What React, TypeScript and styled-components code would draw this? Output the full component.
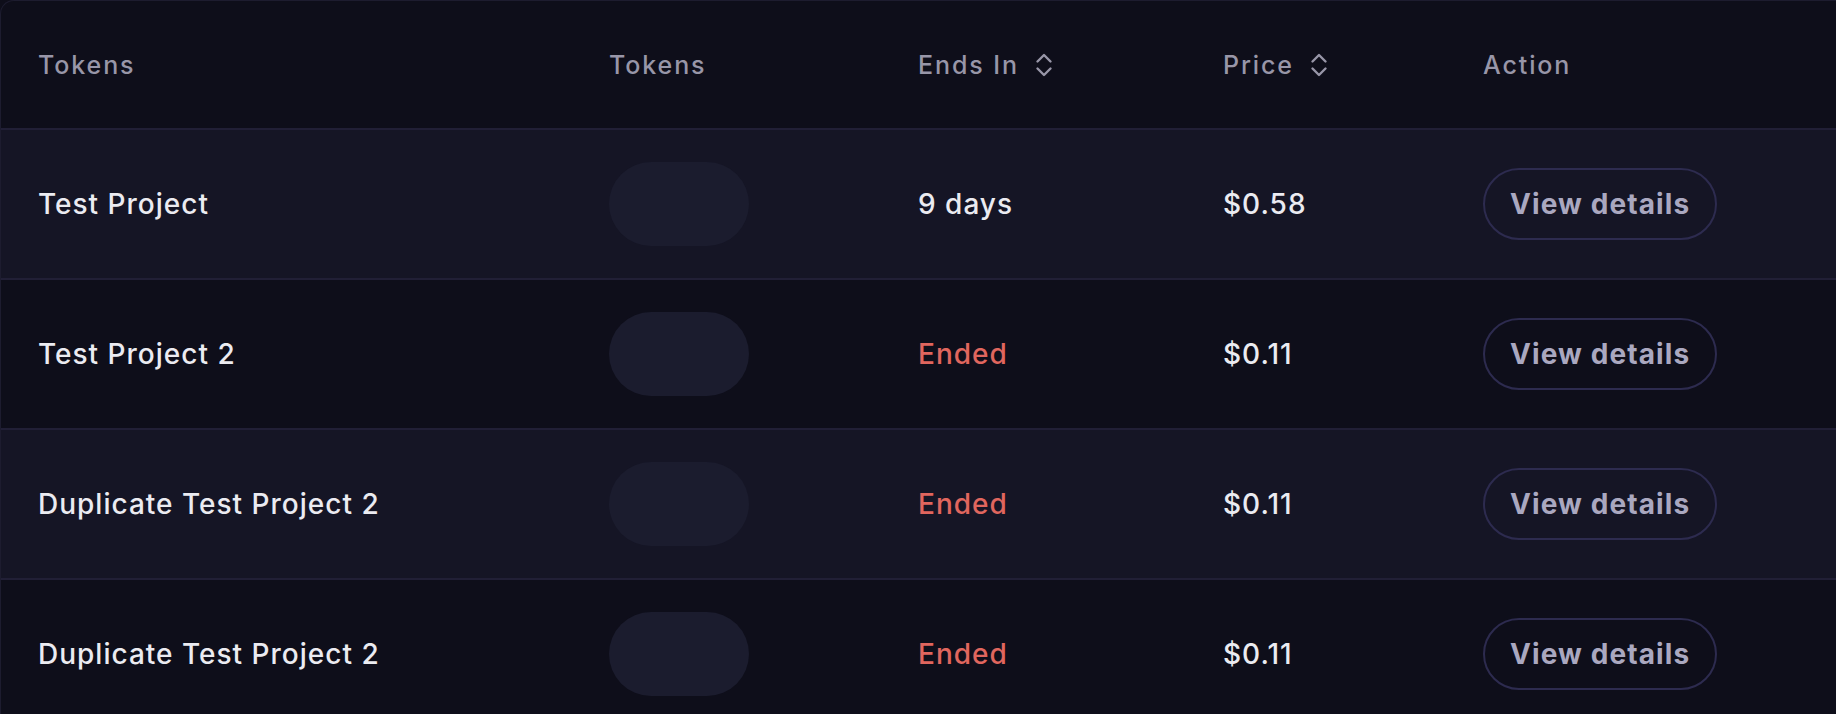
import styled, { createGlobalStyle } from "styled-components";

type Project = {
  name: string;
  endsIn: string;
  ended: boolean;
  price: string;
};

const projects: Project[] = [
  { name: "Test Project", endsIn: "9 days", ended: false, price: "$0.58" },
  { name: "Test Project 2", endsIn: "Ended", ended: true, price: "$0.11" },
  { name: "Duplicate Test Project 2", endsIn: "Ended", ended: true, price: "$0.11" },
  { name: "Duplicate Test Project 2", endsIn: "Ended", ended: true, price: "$0.11" },
];

function SortIcon() {
  return (
    <svg width="18" height="26" viewBox="0 0 18 26" fill="none">
      <path
        d="M2.5 9.5 L9 3 L15.5 9.5"
        stroke="currentColor"
        strokeWidth="2.4"
        strokeLinecap="round"
        strokeLinejoin="round"
      />
      <path
        d="M2.5 16.5 L9 23 L15.5 16.5"
        stroke="currentColor"
        strokeWidth="2.4"
        strokeLinecap="round"
        strokeLinejoin="round"
      />
    </svg>
  );
}

export default function App() {
  return (
    <>
      <GlobalStyle />
      <Table>
        <HeaderRow>
          <HeadCell>Tokens</HeadCell>
          <HeadCell>Tokens</HeadCell>
          <HeadCell>
            Ends In
            <SortIcon />
          </HeadCell>
          <HeadCell>
            Price
            <SortIcon />
          </HeadCell>
          <HeadCell>Action</HeadCell>
        </HeaderRow>
        {projects.map((p, i) => (
          <Row key={i} $striped={i % 2 === 0}>
            <Cell>{p.name}</Cell>
            <Cell>
              <TokenPill />
            </Cell>
            <Cell $ended={p.ended}>{p.endsIn}</Cell>
            <Cell>{p.price}</Cell>
            <Cell>
              <DetailsButton>View details</DetailsButton>
            </Cell>
          </Row>
        ))}
      </Table>
    </>
  );
}

const GlobalStyle = createGlobalStyle`
  html, body {
    margin: 0;
    padding: 0;
    background: #0e0e1a;
    overflow: hidden;
  }
  body {
    font-family: Inter, "Noto Sans", sans-serif;
    -webkit-font-smoothing: antialiased;
  }
`;

const Table = styled.div`
  width: 100%;
  height: 714px;
  overflow: hidden;
  background: #0e0e1a;
  border-top: 1px solid #1d1c2f;
  border-left: 1px solid #1d1c2f;
  border-top-left-radius: 14px;
  box-sizing: border-box;
`;

const columns = `
  display: grid;
  grid-template-columns: 571px 309px 305px 260px 1fr;
  align-items: center;
  padding-left: 37px;
  box-sizing: border-box;
`;

const HeaderRow = styled.div`
  ${columns}
  height: 127px;
`;

const HeadCell = styled.div`
  display: flex;
  align-items: center;
  gap: 16px;
  font-size: 25px;
  font-weight: 500;
  letter-spacing: 1.9px;
  color: #9896a8;
`;

const Row = styled.div<{ $striped: boolean }>`
  ${columns}
  height: 150px;
  border-top: 2px solid #211f36;
  background: ${(p) => (p.$striped ? "#151525" : "#0e0e1a")};
`;

const Cell = styled.div<{ $ended?: boolean }>`
  display: flex;
  align-items: center;
  font-size: 28px;
  font-weight: 500;
  letter-spacing: 1px;
  color: ${(p) => (p.$ended ? "#e0665e" : "#ebebf1")};
`;

const TokenPill = styled.div`
  width: 140px;
  height: 84px;
  border-radius: 42px;
  background: #1b1c2e;
`;

const DetailsButton = styled.button`
  height: 72px;
  padding: 0 25px;
  border-radius: 36px;
  border: 2px solid #2d2b4f;
  background: transparent;
  color: #aaa8c0;
  font-family: Inter, "Noto Sans", sans-serif;
  font-size: 28px;
  font-weight: 700;
  letter-spacing: 1.1px;
  cursor: pointer;
`;
